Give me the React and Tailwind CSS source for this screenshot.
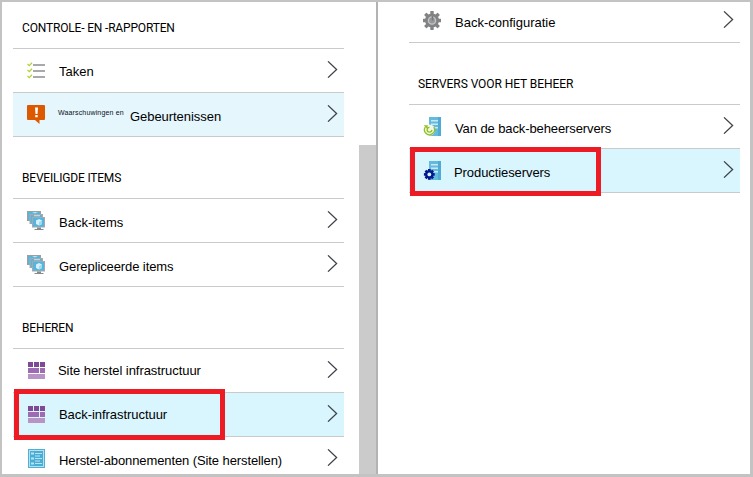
import React from "react";

function TasksIcon() {
  return (
    <>
      {[3, 9, 15].map((y) => (
        <g key={y}>
          <path d={`M.5 ${y}l1.800 1.700L5 ${y - 1.2}`} fill="none" stroke="#b5d334" strokeWidth="1.300" />
          <rect x="6" y={y} width="12" height="2" fill="#a9a9ab" />
        </g>
      ))}
    </>
  );
}

function AlertIcon() {
  return (
    <>
      <path d="M1 0h16a1 1 0 0 1 1 1v13a1 1 0 0 1-1 1h-4.500v4L8 15H1a1 1 0 0 1-1-1V1a1 1 0 0 1 1-1z" fill="#dd5900" />
      <path d="M8 2.500h3l-.5 6.500h-2zM8.200 10h2.500v2.300H8.200z" fill="#fff" />
    </>
  );
}

function MonitorsIcon() {
  return (
    <>
      <path d="M0 0h14v10H0z" fill="#9a9fa3" />
      <path d="M1 1h12v8H1z" fill="#59b4d9" />
      <path d="M5 1l3 1.500L11 1z" fill="#b9e2f2" />
      <path d="M2.500 3H16v10H2.500z" fill="#a9a9ab" />
      <path d="M3.700 4.200H15v8H3.700z" fill="#59b4d9" />
      <path d="M7 4.200h6v1H7z" fill="#c5e7f4" />
      <path d="M5 6h13v10.500H5z" fill="#a5a9ac" />
      <path d="M6 7h11v8.500H6z" fill="#55b5dd" />
      <path d="M12 8l3 1.500V13l-3 1.600L9 13V9.500z" fill="#d8f0f9" />
      <path d="M12 11l3-1.500V13l-3 1.600z" fill="#a3d9ef" />
      <path d="M10 16.500h4V18h2.500v1h-9v-1H10z" fill="#88898b" />
    </>
  );
}

function InfraIcon() {
  return (
    <>
      <path d="M1 1h5v5H1zM7 1h5v5H7zM13 1h5v5h-5z" fill="#804998" />
      <path d="M1 7h11v5H1zM13 7h5v5h-5z" fill="#9c6bb1" />
      <path d="M1 13h17v5H1z" fill="#b793c6" />
    </>
  );
}

function PlanIcon() {
  return (
    <>
      <path d="M1 0h17v19H1z" fill="#4fb0d6" />
      <path d="M2 1h15v17H2z" fill="#b8e0ef" />
      <path d="M3 2h13v15H3z" fill="#48aed6" />
      <path d="M4 3.500h3v2H4zM4 8.500h3v2H4zM4 13.500h3v2H4zM8 4h7v1H8zM8 6.500h5v1H8zM8 9h7v1H8zM8 11.500h5v1H8zM8 14h7v1H8z" fill="#b9e3f2" />
    </>
  );
}

function GearIcon() {
  return (
    <>
      <g fill="#828385">
        {[0, 45, 90, 135].map((a) => (
          <rect key={a} x="7.300" y="0" width="3.400" height="19" rx=".6" transform={`rotate(${a} 9 9.5)`} />
        ))}
        <circle cx="9" cy="9.500" r="7" />
      </g>
      <circle cx="9" cy="9.500" r="3.600" fill="#97989a" stroke="#c6c6c7" strokeWidth="1.300" />
      <path d="M9.500 5v4.500" stroke="#78797b" strokeWidth="1.600" />
    </>
  );
}

function ServerBody() {
  return (
    <>
      <path d="M6 0h9.500v19H6z" fill="#62bade" />
      <path d="M15 0h3v19h-3z" fill="#4fabd3" />
      <path d="M8 3h7v1.500H8zM8 6.500h7V8H8zM8 10h7v1.500H8z" fill="#c9e8f4" />
    </>
  );
}

function BackupServerIcon() {
  return (
    <>
      <ServerBody />
      <circle cx="6.500" cy="13" r="5.600" fill="#f3f9e4" />
      <path d="M2.300 10A5 5 0 1 0 10.800 10.200M6.500 10.300a2.400 2.400 0 1 0 2.400 2.600" fill="none" stroke="#8fbf24" strokeWidth="1.300" />
      <path d="M.6 8.300h4v3.800z" fill="#8fbf24" />
    </>
  );
}

function ProductionServerIcon() {
  return (
    <>
      <ServerBody />
      <g fill="#00188f">
        {[0, 45, 90, 135].map((a) => (
          <rect key={a} x="5" y="8" width="2.600" height="10.800" transform={`rotate(${a} 6.3 13.4)`} />
        ))}
        <circle cx="6.300" cy="13.400" r="4.100" />
      </g>
      <circle cx="6.300" cy="13.400" r="1.900" fill="#d9f5fe" />
    </>
  );
}

function Highlight({ className }) {
  return <div className={`absolute z-10 border-5 border-[#ed1c24] ${className}`} />;
}

function Row({ icon, children, className = "", textClass = "ml-[14px] pt-[14px]" }) {
  return (
    <div className={`relative flex h-11 shrink-0 items-start border-b border-[#cacaca] pl-[14px] pr-[6px] ${className}`}>
      <svg className="mt-3 h-[19px] w-[18px] shrink-0" viewBox="0 0 18 19">{icon}</svg>
      <div className={`flex grow items-start text-[13px] leading-5 whitespace-nowrap ${textClass}`}>{children}</div>
      <svg className="mt-3 h-[17px] w-[11px] shrink-0" viewBox="0 0 11 17" fill="none" stroke="#3f4248" strokeWidth="1.300">
        <path d="M1 .4l8.600 8.100L1 16.600" />
      </svg>
    </div>
  );
}

function Heading({ children, className }) {
  return (
    <h2 className={`shrink-0 border-b border-[#cacaca] pl-[9px] font-['Roboto',sans-serif] text-[12px] leading-4 whitespace-nowrap ${className}`}>
      {children}
    </h2>
  );
}

export default function App() {
  return (
    <main className="flex h-[477px] w-[753px] overflow-hidden border-t-2 border-r-3 border-b-3 border-l-2 border-[#c3c3c3] bg-white font-['Liberation_Sans',Arial,sans-serif] text-black">
      <section className="flex h-full w-[357px] shrink-0 flex-col overflow-hidden pl-[11px] pr-[15px]">
        <Heading className="h-[47px] pt-[18px] tracking-[-0.17px]">CONTROLE- EN -RAPPORTEN</Heading>
        <Row icon={<TasksIcon />} textClass="ml-[14px] pt-[13px]">Taken</Row>
        <Row icon={<AlertIcon />} className="bg-[#e5f6fd]">
          <span className="-mt-[4px] -ml-px w-[72px] text-[7px] tracking-[0.15px] text-[#0a1024]">Waarschuwingen en</span>
          <span className="tracking-[-0.05px]">Gebeurtenissen</span>
        </Row>
        <Heading className="h-[62px] pt-[33px] tracking-[-0.2px]">BEVEILIGDE ITEMS</Heading>
        <Row icon={<MonitorsIcon />}>Back-items</Row>
        <Row icon={<MonitorsIcon />} textClass="ml-[14px] pt-[14px] tracking-[-0.1px]">Gerepliceerde items</Row>
        <Heading className="h-[62px] pt-[33px] tracking-[-0.15px]">BEHEREN</Heading>
        <Row icon={<InfraIcon />} textClass="ml-[13px] pt-[12px] tracking-[-0.06px]">Site herstel infrastructuur</Row>
        <Row icon={<InfraIcon />} textClass="ml-[14px] pt-[12px] tracking-[-0.05px]" className="bg-[#d9f5fe]">
          Back-infrastructuur
          <Highlight className="top-[-4px] left-px h-[51px] w-[211px]" />
        </Row>
        <Row icon={<PlanIcon />} textClass="ml-[14px] pt-[14px] tracking-[-0.1px]">Herstel-abonnementen (Site herstellen)</Row>
      </section>
      <div className="mt-[143px] w-[17px] shrink-0 bg-[#cbcbcb]" />
      <section className="flex h-full grow flex-col border-l-2 border-[#b3b3b3] pl-[31px] pr-[10px]">
        <Row icon={<GearIcon />} className="-mt-[3px]">Back-configuratie</Row>
        <Heading className="h-[62px] pt-[33px] tracking-[-0.07px]">SERVERS VOOR HET BEHEER</Heading>
        <Row icon={<BackupServerIcon />} textClass="ml-[14px] pt-[14px] tracking-[-0.1px]">Van de back-beheerservers</Row>
        <Row icon={<ProductionServerIcon />} textClass="ml-[13px] pt-[14px] tracking-[-0.08px]" className="bg-[#d9f5fe]">
          Productieservers
          <Highlight className="top-[-2px] left-px h-[49px] w-[191px]" />
        </Row>
      </section>
    </main>
  );
}
